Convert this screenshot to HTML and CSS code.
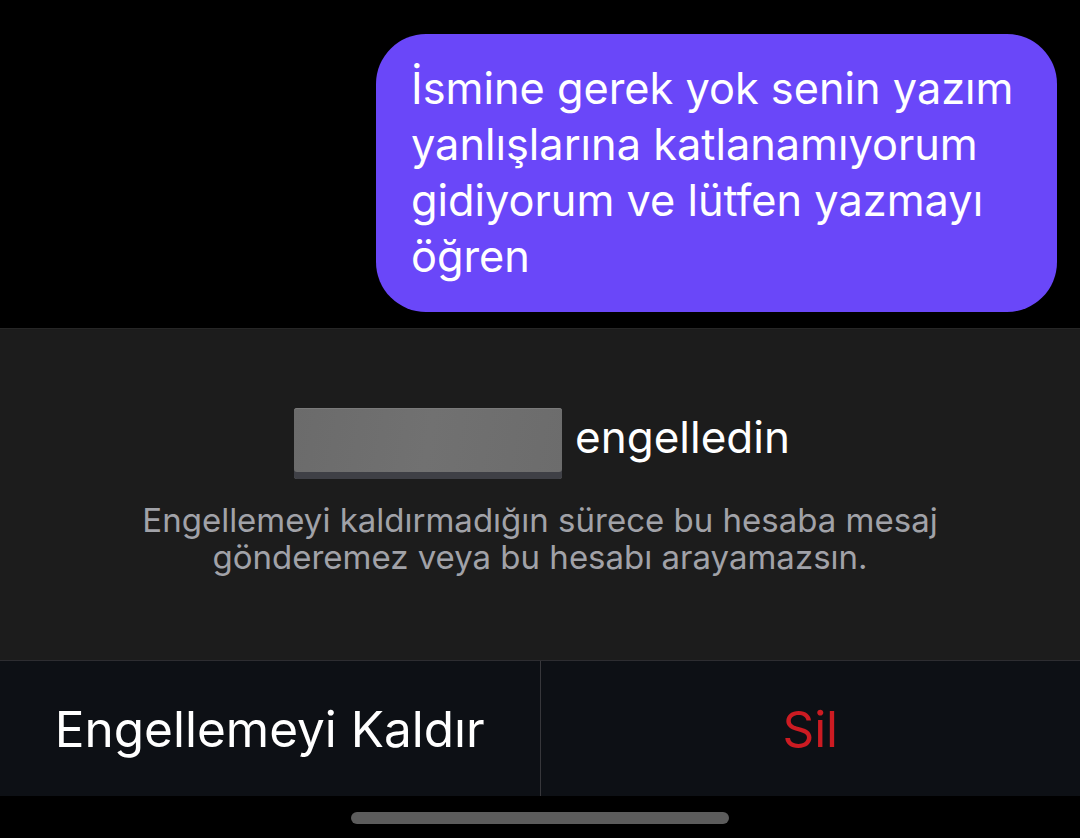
FILE: index.html
```html
<!DOCTYPE html>
<html lang="tr">
<head>
<meta charset="utf-8">
<link rel="stylesheet" href="styles.css">
</head>
<body>
<div class="screen">
  <div class="chat">
    <div class="bubble">İsmine gerek yok senin yazım yanlışlarına katlanamıyorum gidiyorum ve lütfen yazmayı öğren</div>
  </div>
  <div class="panel">
    <div class="title"><span class="redact"></span><span class="title-text">engelledin</span></div>
    <p class="desc">Engellemeyi kaldırmadığın sürece bu hesaba mesaj<br>gönderemez veya bu hesabı arayamazsın.</p>
  </div>
  <div class="actions">
    <div class="btn unblock">Engellemeyi Kaldır</div>
    <div class="btn delete">Sil</div>
  </div>
  <div class="navbar"><span class="handle"></span></div>
</div>
</body>
</html>
```
FILE: styles.css
```css
* { box-sizing: border-box; }
html, body { margin: 0; padding: 0; background: #000; }
body { font-family: Inter, Roboto, sans-serif; }
.screen { width: 1080px; height: 838px; display: flex; flex-direction: column; overflow: hidden; }
.chat { height: 328px; display: flex; justify-content: flex-end; padding: 34px 23px 0 0; background: #000; }
.bubble {
  width: 681px; height: 278px;
  background: #6a47f9; color: #fff;
  border-radius: 50px;
  padding: 26px 20px 0 35px;
  font-size: 43.3px; line-height: 56px;
}
.panel {
  height: 333px; background: #1c1c1c;
  border-top: 1px solid #262626;
  border-bottom: 1px solid #2d2d31;
  display: flex; flex-direction: column; align-items: center;
  padding-top: 79px;
}
.title { display: flex; align-items: flex-start; gap: 13px; height: 71px; padding-left: 4px; }
.redact {
  width: 268px; height: 71px;
  background: linear-gradient(100deg, #6b6b6b, #717171 50%, #6c6c6c);
  border-radius: 3px;
  box-shadow: inset 0 -7px 0 #3f4046, inset 0 1px 0 #7a7a7a;
}
.title-text { color: #fff; font-size: 44px; line-height: 58px; }
.desc {
  margin: 23px 0 0; color: #a1a2a8; text-align: center;
  font-size: 33px; line-height: 37px;
}
.actions { height: 135px; display: flex; background: #0d1015; }
.btn { flex: 1; display: flex; align-items: center; justify-content: center; font-size: 49.5px; }
.unblock { color: #fff; border-right: 1px solid #37373b; }
.delete { color: #cc1b22; }
.navbar { flex: 1; background: #000; display: flex; justify-content: center; padding-top: 16px; }
.handle { width: 378px; height: 12px; border-radius: 6px; background: #5c5c5c; }
```
